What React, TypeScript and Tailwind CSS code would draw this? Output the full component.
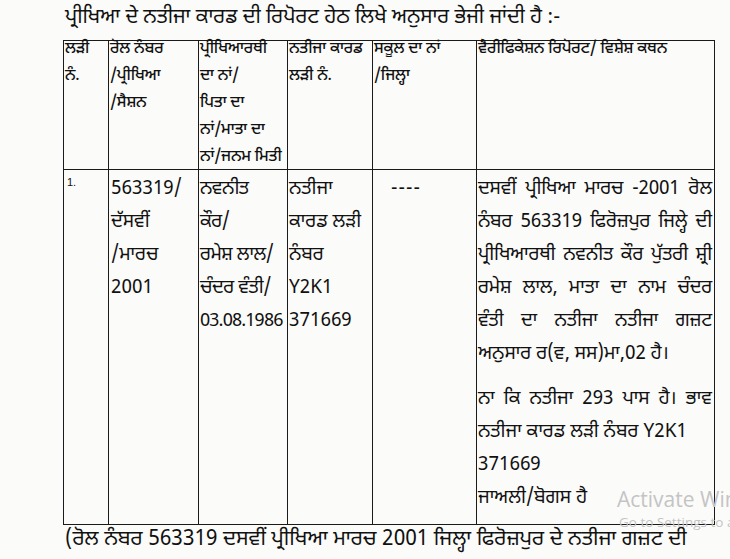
import React from 'react';

const pa = { fontFamily: '"Noto Sans Gurmukhi", "Lohit Gurmukhi", "Raavi", "Noto Sans", "DejaVu Sans", sans-serif' };

const headers: string[][] = [
  ['ਲੜੀ', 'ਨੰ.'],
  ['ਰੋਲ ਨੰਬਰ', '/ਪ੍ਰੀਖਿਆ', '/ਸੈਸ਼ਨ'],
  ['ਪ੍ਰੀਖਿਆਰਥੀ', 'ਦਾ ਨਾਂ/', 'ਪਿਤਾ ਦਾ', 'ਨਾਂ/ਮਾਤਾ ਦਾ', 'ਨਾਂ/ਜਨਮ ਮਿਤੀ'],
  ['ਨਤੀਜਾ ਕਾਰਡ', 'ਲੜੀ ਨੰ.'],
  ['ਸਕੂਲ ਦਾ ਨਾਂ', '/ਜਿਲ੍ਹਾ'],
  ['ਵੈਰੀਫਿਕੇਸ਼ਨ ਰਿਪੋਰਟ/ ਵਿਸ਼ੇਸ਼ ਕਥਨ'],
];

const widths = ['w-[45px]', 'w-[90px]', 'w-[89px]', 'w-[85px]', 'w-[104px]', 'w-[238px]'];

const report = [
  'ਦਸਵੀਂ ਪ੍ਰੀਖਿਆ ਮਾਰਚ -2001 ਰੋਲ',
  'ਨੰਬਰ 563319 ਫਿਰੋਜ਼ਪੁਰ ਜਿਲ੍ਹੇ ਦੀ',
  'ਪ੍ਰੀਖਿਆਰਥੀ ਨਵਨੀਤ ਕੌਰ ਪੁੱਤਰੀ ਸ਼੍ਰੀ',
  'ਰਮੇਸ਼ ਲਾਲ, ਮਾਤਾ ਦਾ ਨਾਮ ਚੰਦਰ',
  'ਵੰਤੀ ਦਾ ਨਤੀਜਾ ਨਤੀਜਾ ਗਜ਼ਟ',
];

function Lines({ lines, className }: { lines: string[]; className?: string }) {
  return (
    <div className={className}>
      {lines.map((l, i) => (
        <div key={i} className="whitespace-nowrap">{l}</div>
      ))}
    </div>
  );
}

const cell = 'border-[1.5px] border-[#1a1a1a] align-top';

export default function App() {
  return (
    <div className="relative w-[730px] h-[559px] overflow-hidden bg-[#fbfbfa] text-[#111]" style={pa}>
      <div className="pl-[65px] pt-[3px] h-[40px] text-[20.5px] leading-[30px] whitespace-nowrap">
        ਪ੍ਰੀਖਿਆ ਦੇ ਨਤੀਜਾ ਕਾਰਡ ਦੀ ਰਿਪੋਰਟ ਹੇਠ ਲਿਖੇ ਅਨੁਸਾਰ ਭੇਜੀ ਜਾਂਦੀ ਹੈ :-
      </div>
      <table className="ml-[63px] border-collapse table-fixed">
        <tbody>
          <tr className="h-[128px]">
            {headers.map((h, i) => (
              <td key={i} className={`${widths[i]} ${cell} px-[1px] pt-0`}>
                <Lines lines={h} className="-mt-[5px] mb-[-2px] text-[16px] leading-[27px] font-medium tracking-[-0.2px]" />
              </td>
            ))}
          </tr>
          <tr className="h-[355px]">
            <td className={`${cell} pl-[3px] pt-[5px] text-[11px] leading-[14px] font-['Liberation_Sans']`}>
              1.
            </td>
            <td className={`${cell} pl-[2px] pt-[3px]`}>
              <Lines
                lines={['563319/', 'ਦੱਸਵੀਂ', '/ਮਾਰਚ', '2001']}
                className="text-[19px] leading-[33px]"
              />
            </td>
            <td className={`${cell} pl-[1px] pt-[3px] overflow-hidden`}>
              <Lines
                lines={['ਨਵਨੀਤ', 'ਕੌਰ/', 'ਰਮੇਸ਼ ਲਾਲ/', 'ਚੰਦਰ ਵੰਤੀ/']}
                className="text-[19px] leading-[33px] tracking-[-0.5px]"
              />
              <div className="text-[18.5px] leading-[33px] tracking-[-0.9px] whitespace-nowrap">03.08.1986</div>
            </td>
            <td className={`${cell} pl-[1px] pt-[3px]`}>
              <Lines
                lines={['ਨਤੀਜਾ', 'ਕਾਰਡ ਲੜੀ', 'ਨੰਬਰ', 'Y2K1', '371669']}
                className="text-[19px] leading-[33px]"
              />
            </td>
            <td className={`${cell} pt-[3px]`}>
              <div className="pl-[18px] text-[19px] leading-[33px] tracking-[1px]">----</div>
            </td>
            <td className={`${cell} pl-[1px] pr-[2px] pt-[3px] text-[19px] leading-[33px]`}>
              {report.map((l, i) => (
                <div key={i} className="text-justify [text-align-last:justify] whitespace-nowrap tracking-[-0.2px]">{l}</div>
              ))}
              <div className="whitespace-nowrap">ਅਨੁਸਾਰ ਰ(ਵ, ਸਸ)ਮਾ,02 ਹੈ।</div>
              <div className="mt-[12px] text-justify [text-align-last:justify] whitespace-nowrap">ਨਾ ਕਿ ਨਤੀਜਾ 293 ਪਾਸ ਹੈ। ਭਾਵ</div>
              <div className="whitespace-nowrap">ਨਤੀਜਾ ਕਾਰਡ ਲੜੀ ਨੰਬਰ Y2K1</div>
              <div>371669</div>
              <div>ਜਾਅਲੀ/ਬੋਗਸ ਹੈ</div>
            </td>
          </tr>
        </tbody>
      </table>
      <div className="pl-[65px] pt-[1px] text-[21px] leading-[28px] whitespace-nowrap">
        (ਰੋਲ ਨੰਬਰ 563319 ਦਸਵੀਂ ਪ੍ਰੀਖਿਆ ਮਾਰਚ 2001 ਜਿਲ੍ਹਾ ਫਿਰੋਜ਼ਪੁਰ ਦੇ ਨਤੀਜਾ ਗਜ਼ਟ ਦੀ
      </div>
      <div className="absolute left-[617px] top-[487px] text-[#c4c4c4] whitespace-nowrap font-['Open_Sans']">
        <div className="text-[21px] leading-[25px]">Activate Windows</div>
        <div className="text-[13.5px] leading-[20px] pl-[2px]">Go to Settings to activate Windows.</div>
      </div>
    </div>
  );
}
